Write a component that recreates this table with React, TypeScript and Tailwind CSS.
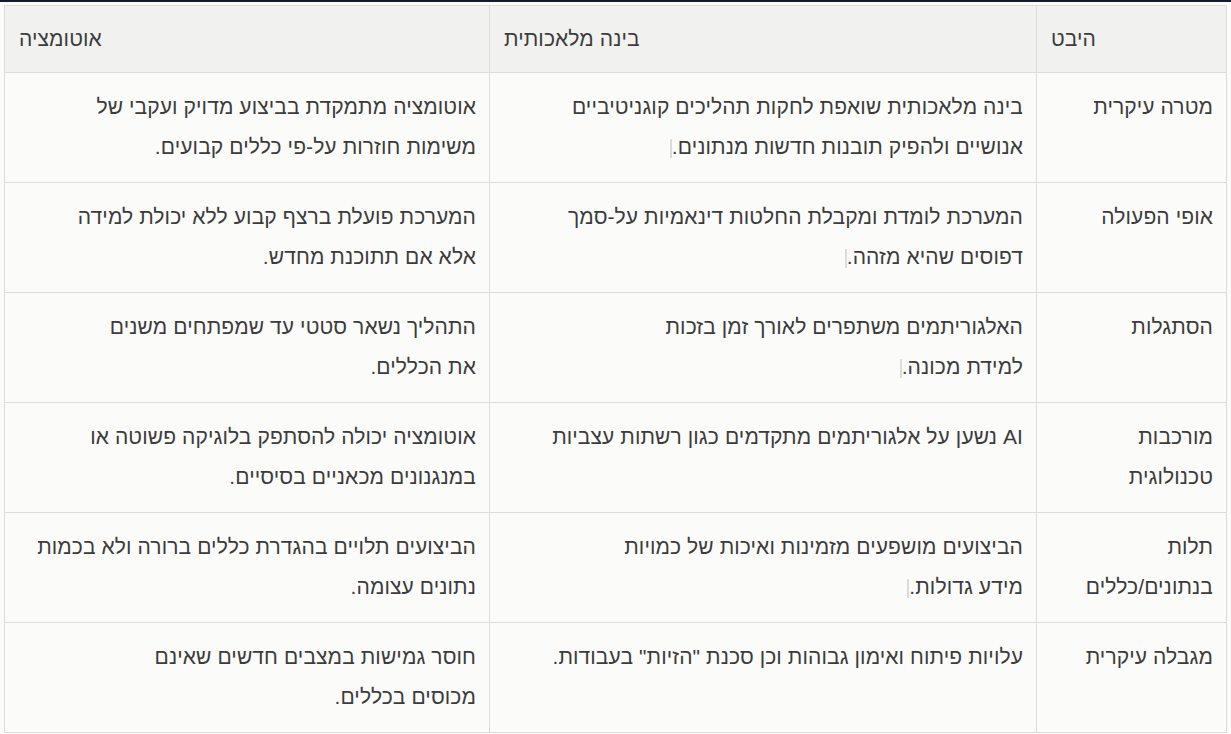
const rows: { aspect: string[]; ai: string[]; auto: string[]; aiMark?: boolean }[] = [
  {
    aspect: ["מטרה עיקרית"],
    ai: ["בינה מלאכותית שואפת לחקות תהליכים קוגניטיביים", "אנושיים ולהפיק תובנות חדשות מנתונים."],
    auto: ["אוטומציה מתמקדת בביצוע מדויק ועקבי של", "משימות חוזרות על-פי כללים קבועים."],
    aiMark: true,
  },
  {
    aspect: ["אופי הפעולה"],
    ai: ["המערכת לומדת ומקבלת החלטות דינאמיות על-סמך", "דפוסים שהיא מזהה."],
    auto: ["המערכת פועלת ברצף קבוע ללא יכולת למידה", "אלא אם תתוכנת מחדש."],
    aiMark: true,
  },
  {
    aspect: ["הסתגלות"],
    ai: ["האלגוריתמים משתפרים לאורך זמן בזכות", "למידת מכונה."],
    auto: ["התהליך נשאר סטטי עד שמפתחים משנים", "את הכללים."],
    aiMark: true,
  },
  {
    aspect: ["מורכבות", "טכנולוגית"],
    ai: ["AI נשען על אלגוריתמים מתקדמים כגון רשתות עצביות"],
    auto: ["אוטומציה יכולה להסתפק בלוגיקה פשוטה או", "במנגנונים מכאניים בסיסיים."],
  },
  {
    aspect: ["תלות", "בנתונים/כללים"],
    ai: ["הביצועים מושפעים מזמינות ואיכות של כמויות", "מידע גדולות."],
    auto: ["הביצועים תלויים בהגדרת כללים ברורה ולא בכמות", "נתונים עצומה."],
    aiMark: true,
  },
  {
    aspect: ["מגבלה עיקרית"],
    ai: ["עלויות פיתוח ואימון גבוהות וכן סכנת \"הזיות\" בעבודות."],
    auto: ["חוסר גמישות במצבים חדשים שאינם", "מכוסים בכללים."],
  },
];

const Lines = ({ lines, mark }: { lines: string[]; mark?: boolean }) => (
  <>
    {lines.map((l, i) => (
      <div key={i} className="whitespace-nowrap">
        {l}
        {mark && i === lines.length - 1 && (
          <span className="inline-block w-[2px] h-[19px] bg-[#dcdcd8] align-middle"></span>
        )}
      </div>
    ))}
  </>
);

const App = () => {
  const th = "text-left font-normal bg-[#f1f2ef] border border-[#dcdcd8] px-[14px] py-[13px] leading-[40px]";
  const td = "text-right align-top border border-[#dcdcd8] px-[13px] pt-[14px] pb-[15px] leading-[40px]";

  return (
    <main className="min-h-screen bg-[#fbfbf9] border-t-2 border-[#121a2b] px-[4px] pt-[3px] text-[#3c3c3c] text-[21px] tracking-[0.1px]" style={{ fontFamily: '"Liberation Sans", Arial, sans-serif' }}>
      <table dir="rtl" className="w-full border-collapse table-fixed">
        <thead>
          <tr>
            <th className={th + " w-[190px]"}>היבט</th>
            <th className={th + " w-[547px]"}>בינה מלאכותית</th>
            <th className={th}>אוטומציה</th>
          </tr>
        </thead>
        <tbody>
          {rows.map((r, i) => (
            <tr key={i}>
              <td className={td}><Lines lines={r.aspect} /></td>
              <td className={td}><Lines lines={r.ai} mark={r.aiMark} /></td>
              <td className={td}><Lines lines={r.auto} /></td>
            </tr>
          ))}
        </tbody>
      </table>
    </main>
  );
};

export default App;
